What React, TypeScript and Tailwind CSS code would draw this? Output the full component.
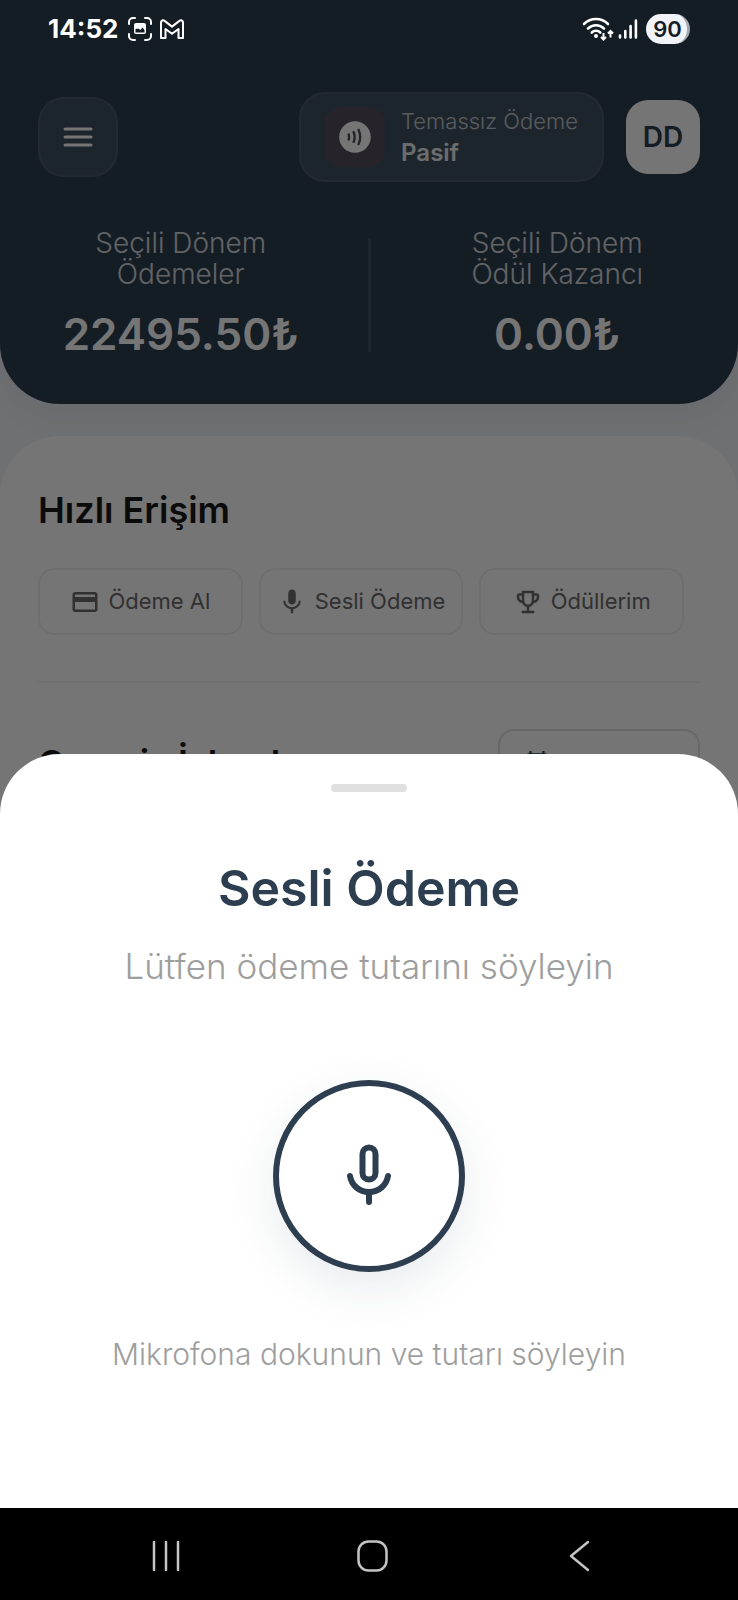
import React, { useState } from 'react';
import {
  MdContactless,
  MdMic,
  MdOutlineCalendarToday,
  MdOutlineEmojiEvents,
  MdPayment,
} from 'react-icons/md';

const quickActions = [
  { label: 'Ödeme Al', icon: MdPayment },
  { label: 'Sesli Ödeme', icon: MdMic },
  { label: 'Ödüllerim', icon: MdOutlineEmojiEvents },
];

const totals = [
  { label: 'Seçili Dönem Ödemeler', value: '22495.50₺' },
  { label: 'Seçili Dönem Ödül Kazancı', value: '0.00₺' },
];

function StatusBar() {
  return (
    <div className="relative z-20 flex h-[58px] items-center justify-between px-12 text-white">
      <div className="flex items-center">
        <span className="text-[26px] leading-8 font-bold">14:52</span>
        <svg className="ml-2.5 h-6 w-6" viewBox="0 0 24 24" fill="none">
          <path
            d="M1 7V5a4 4 0 0 1 4-4h2M17 1h2a4 4 0 0 1 4 4v2M23 17v2a4 4 0 0 1-4 4h-2M7 23H5a4 4 0 0 1-4-4v-2"
            stroke="currentColor"
            strokeWidth="2"
            strokeLinecap="round"
          />
          <path
            fillRule="evenodd"
            fill="currentColor"
            d="M8 6h8a2 2 0 0 1 2 2v7a2 2 0 0 1-2 2H8a2 2 0 0 1-2-2V8a2 2 0 0 1 2-2Zm-.5 6v3.500h9v-2.500l-2-2.500-2.200 2.500-2-1.500Z"
          />
        </svg>
        <svg className="ml-2 h-5 w-6" viewBox="0 0 24 20" fill="none">
          <path
            d="M1 3.500C1 1.500 3 .6 4.600 1.900L12 7.600l7.400-5.700C21 .6 23 1.500 23 3.500V19h-4.500V10l-6.500 4.800L5.500 10v9H1Z"
            stroke="currentColor"
            strokeWidth="2"
            strokeLinejoin="round"
          />
        </svg>
      </div>
      <div className="flex items-center">
        <svg className="h-6 w-8" viewBox="0 0 32 24" fill="none">
          <g stroke="currentColor" strokeWidth="2.600" strokeLinecap="round">
            <path d="M2 7a17 17 0 0 1 24 0" />
            <path d="M6 11.500a11.500 11.500 0 0 1 16 0" />
            <path d="M9.800 15.500a6 6 0 0 1 8.500 0" />
          </g>
          <circle cx="14" cy="19" r="2" fill="currentColor" />
          <path
            d="M21.500 16v6.500M19 20l2.500 2.500L24 20M28.500 20.500V14M26 16.500l2.500-2.500 2.500 2.500"
            stroke="currentColor"
            strokeWidth="2"
          />
        </svg>
        <svg className="ml-1 h-5 w-5" viewBox="0 0 20 20" fill="none">
          <path
            d="M2 16.500v2M7.300 12v6.500M12.600 7v11.500M17.900 1.500v17"
            stroke="currentColor"
            strokeWidth="2.600"
            strokeLinecap="round"
          />
        </svg>
        <span className="ml-2 flex h-[30px] w-11 items-center justify-center rounded-full border-r-3 border-[#a3a7ae] bg-[#f1f3f8] pl-0.5 text-[22px] leading-7 font-semibold text-[#151c25]">
          90
        </span>
      </div>
    </div>
  );
}

function Header() {
  return (
    <header className="rounded-b-[60px] bg-[#2c3e50] shadow-[0_10px_40px_rgba(44,62,80,0.08)]">
      <StatusBar />

      <div className="mt-8.5 flex items-center justify-between px-[38px]">
        <button
          type="button"
          aria-label="Menü"
          className="flex h-20 w-20 items-center justify-center rounded-[26px] border-2 border-white/5 bg-white/10 text-white"
        >
          <svg className="h-6 w-8" viewBox="0 0 32 24" fill="none">
            <path
              d="M3 4h26M3 12h26M3 20h26"
              stroke="currentColor"
              strokeWidth="3"
              strokeLinecap="round"
            />
          </svg>
        </button>

        <div className="flex items-center gap-5.5">
          <button
            type="button"
            className="flex h-[90px] items-center gap-4 rounded-[26px] border-2 border-white/5 bg-white/10 px-6 text-left"
          >
            <span className="flex h-15 w-15 items-center justify-center rounded-2xl bg-red-500/10 text-white">
              <MdContactless size={38} />
            </span>
            <span className="flex flex-col">
              <span className="text-[22px] leading-8 font-light text-white/70">
                Temassız Ödeme
              </span>
              <span className="text-2xl leading-8 font-semibold text-white/90">
                Pasif
              </span>
            </span>
          </button>
          <button
            type="button"
            aria-label="Profil"
            className="h-[74px] w-[74px] rounded-[22px] bg-white text-[28px] font-semibold text-[#2c3e50]"
          >
            DD
          </button>
        </div>
      </div>

      <div className="mt-11.5 flex px-[38px] pb-[42px] text-center">
        <div className="flex-1 px-10">
          <p className="text-[28px] leading-[31px] font-light text-white/80">
            {totals[0].label}
          </p>
          <p className="-mx-10 mt-4 text-[44px] leading-14 font-semibold text-white">
            {totals[0].value}
          </p>
        </div>
        <div className="mx-11 my-2.5 w-[3px] bg-white/10" />
        <div className="flex-1 px-10">
          <p className="text-[28px] leading-[31px] font-light text-white/80">
            {totals[1].label}
          </p>
          <p className="-mx-10 mt-4 text-[44px] leading-14 font-semibold text-white">
            {totals[1].value}
          </p>
        </div>
      </div>
    </header>
  );
}

function HomeContent() {
  return (
    <main className="mt-8 flex-1 rounded-t-[60px] bg-white px-[38px] pt-12.5">
      <h2 className="text-4xl leading-12 font-semibold text-[#1a1a1a]">
        Hızlı Erişim
      </h2>

      <div className="mt-8.5 flex gap-4 pr-4">
        {quickActions.map(({ label, icon: Icon }) => (
          <button
            key={label}
            type="button"
            className="flex h-[67px] flex-1 items-center justify-center gap-2 rounded-2xl border-2 border-[#f0f0f0] text-[22px] whitespace-nowrap text-[#6b6b6b]"
          >
            <Icon size={30} className="shrink-0" />
            {label}
          </button>
        ))}
      </div>

      <hr className="mt-11.5 border-t-2 border-[#f7f7f7]" />

      <div className="mt-11.5 flex items-center justify-between">
        <h2 className="text-4xl leading-12 font-semibold text-[#1a1a1a]">
          Geçmiş İşlemler
        </h2>
        <button
          type="button"
          aria-label="Tarih seç"
          className="flex h-[68px] w-[202px] items-center rounded-2xl border-2 border-[#e0e0e0] pl-6 text-[#2c3e50]"
        >
          <MdOutlineCalendarToday size={26} />
        </button>
      </div>
    </main>
  );
}

function VoicePaymentSheet() {
  const [listening, setListening] = useState(false);

  return (
    <section
      role="dialog"
      aria-labelledby="voice-title"
      className="absolute inset-x-0 bottom-0 z-30 flex flex-col items-center rounded-t-[60px] bg-white pt-7.5 pb-34 text-center"
    >
      <div className="h-2 w-19 rounded-full bg-[#e0e0e0]" />
      <h1
        id="voice-title"
        className="mt-16 text-[50px] leading-16 font-semibold text-[#2c3e50]"
      >
        Sesli Ödeme
      </h1>
      <p className="mt-6 text-[35px] leading-11 font-light text-[#9e9e9e]">
        Lütfen ödeme tutarını söyleyin
      </p>
      <button
        type="button"
        aria-label="Mikrofon"
        aria-pressed={listening}
        onClick={() => setListening(!listening)}
        className="mt-[92px] flex h-48 w-48 items-center justify-center rounded-full border-6 border-[#2c3e50] bg-white text-[#2c3e50] shadow-[0_16px_48px_rgba(44,62,80,0.1)]"
      >
        <svg className="h-16 w-11" viewBox="0 0 44 64" fill="none">
          <g stroke="currentColor" strokeWidth="6" strokeLinecap="round">
            <rect x="15.500" y="3.500" width="13" height="32" rx="6.500" />
            <path d="M3 32c1.500 9 9 16 19 16s17.500-7 19-16" />
            <path d="M22 48v10" />
          </g>
        </svg>
      </button>
      <p className="mt-16 text-[30px] leading-9 font-light text-[#9e9e9e]">
        Mikrofona dokunun ve tutarı söyleyin
      </p>
    </section>
  );
}

function NavigationBar() {
  return (
    <nav className="grid h-[92px] grid-cols-3 items-center justify-items-center bg-black pt-1 pl-16 pr-14 text-[#c4c4c4]">
      <button type="button" aria-label="Son uygulamalar">
        <svg className="h-8 w-8" viewBox="0 0 32 32" fill="none">
          <path
            d="M3 2v28M15 2v28M27 2v28"
            stroke="currentColor"
            strokeWidth="2.500"
            strokeLinecap="round"
          />
        </svg>
      </button>
      <button type="button" aria-label="Ana ekran">
        <svg className="h-8 w-8" viewBox="0 0 32 32" fill="none">
          <rect
            x="1.500"
            y="1.500"
            width="28"
            height="29"
            rx="10"
            stroke="currentColor"
            strokeWidth="2.500"
          />
        </svg>
      </button>
      <button type="button" aria-label="Geri">
        <svg className="h-8 w-8" viewBox="0 0 32 32" fill="none">
          <path
            d="M25 2 8 16l17 14"
            stroke="currentColor"
            strokeWidth="2.500"
            strokeLinecap="round"
            strokeLinejoin="round"
          />
        </svg>
      </button>
    </nav>
  );
}

export default function App() {
  return (
    <div className="flex min-h-screen flex-col bg-black font-['Inter','Open_Sans',sans-serif]">
      <div className="relative flex flex-1 flex-col overflow-hidden bg-[#f1f4f9]">
        <Header />
        <HomeContent />
        <div className="absolute inset-0 z-10 bg-black/54" />
        <VoicePaymentSheet />
      </div>
      <NavigationBar />
    </div>
  );
}
